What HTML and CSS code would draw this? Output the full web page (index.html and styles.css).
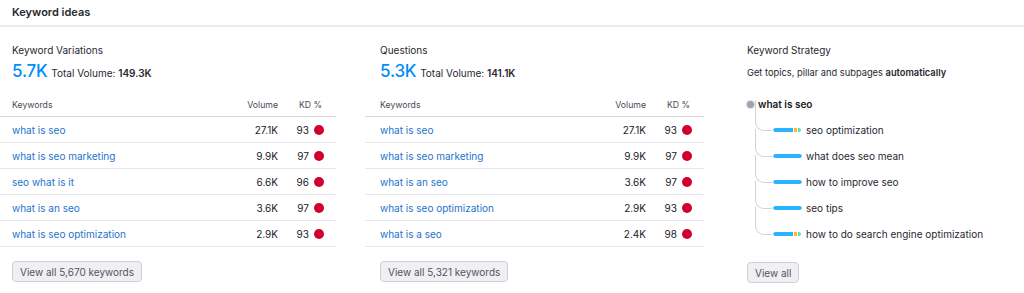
FILE: index.html
```html
<!DOCTYPE html>
<html lang="en">
<head>
<meta charset="utf-8">
<title>Keyword ideas</title>
<link rel="stylesheet" href="styles.css">
</head>
<body>
<div class="widget">
  <div class="widget-head">Keyword ideas</div>
  <div class="cols">
    <section class="col">
      <div class="col-title">Keyword Variations</div>
      <div class="summary"><span class="big">5.7K</span> Total Volume: <b>149.3K</b></div>
      <div class="kw-table">
        <div class="kw-row head"><span>Keywords</span><span class="vol">Volume</span><span class="kd-h">KD %</span></div>
        <div class="kw-row"><a class="kw" href="#">what is seo</a><span class="vol">27.1K</span><span class="kd">93<i class="dot"></i></span></div>
        <div class="kw-row"><a class="kw" href="#">what is seo marketing</a><span class="vol">9.9K</span><span class="kd">97<i class="dot"></i></span></div>
        <div class="kw-row"><a class="kw" href="#">seo what is it</a><span class="vol">6.6K</span><span class="kd">96<i class="dot"></i></span></div>
        <div class="kw-row"><a class="kw" href="#">what is an seo</a><span class="vol">3.6K</span><span class="kd">97<i class="dot"></i></span></div>
        <div class="kw-row"><a class="kw" href="#">what is seo optimization</a><span class="vol">2.9K</span><span class="kd">93<i class="dot"></i></span></div>
      </div>
      <button class="btn">View all 5,670 keywords</button>
    </section>
    <section class="col">
      <div class="col-title">Questions</div>
      <div class="summary"><span class="big">5.3K</span> Total Volume: <b>141.1K</b></div>
      <div class="kw-table">
        <div class="kw-row head"><span>Keywords</span><span class="vol">Volume</span><span class="kd-h">KD %</span></div>
        <div class="kw-row"><a class="kw" href="#">what is seo</a><span class="vol">27.1K</span><span class="kd">93<i class="dot"></i></span></div>
        <div class="kw-row"><a class="kw" href="#">what is seo marketing</a><span class="vol">9.9K</span><span class="kd">97<i class="dot"></i></span></div>
        <div class="kw-row"><a class="kw" href="#">what is an seo</a><span class="vol">3.6K</span><span class="kd">97<i class="dot"></i></span></div>
        <div class="kw-row"><a class="kw" href="#">what is seo optimization</a><span class="vol">2.9K</span><span class="kd">93<i class="dot"></i></span></div>
        <div class="kw-row"><a class="kw" href="#">what is a seo</a><span class="vol">2.4K</span><span class="kd">98<i class="dot"></i></span></div>
      </div>
      <button class="btn">View all 5,321 keywords</button>
    </section>
    <section class="col strategy">
      <div class="col-title">Keyword Strategy</div>
      <div class="desc">Get topics, pillar and subpages <b>automatically</b></div>
      <div class="tree">
        <div class="root"><i class="root-dot"></i>what is seo</div>
        <ul class="children">
          <li><span class="bar"><i class="b-blue"></i><i class="b-yellow"></i><i class="b-green"></i></span>seo optimization</li>
          <li><span class="bar"><i class="b-full"></i></span>what does seo mean</li>
          <li><span class="bar"><i class="b-full"></i></span>how to improve seo</li>
          <li><span class="bar"><i class="b-full"></i></span>seo tips</li>
          <li><span class="bar"><i class="b-blue"></i><i class="b-yellow"></i><i class="b-green"></i></span>how to do search engine optimization</li>
        </ul>
      </div>
      <button class="btn">View all</button>
    </section>
  </div>
</div>
</body>
</html>
```

FILE: styles.css
```css
* { box-sizing: border-box; }
html, body { margin: 0; padding: 0; background: #fff; }
body {
  font-family: Inter, "Noto Sans", "Liberation Sans", sans-serif;
  color: #191b23;
  font-size: 10px;
  overflow: hidden;
}
.widget { width: 1024px; }
.widget-head {
  height: 27px;
  padding: 5px 12px 0;
  font-size: 11px;
  font-weight: 600;
  line-height: 15px;
  color: #27282f;
  border-bottom: 2px solid #ececee;
}
.cols {
  display: grid;
  grid-template-columns: 339px 339px 1fr;
  column-gap: 29px;
  margin-left: -3px;
  padding-top: 16px;
}
.col { padding-left: 15px; }
.strategy { padding-left: 14px; }
.col-title {
  font-size: 10px;
  line-height: 14px;
  color: #27282f;
}
.summary {
  margin-top: 3px;
  height: 22px;
  display: flex;
  align-items: baseline;
  font-size: 10px;
  color: #27282f;
  white-space: pre;
}
.summary .big {
  font-size: 17px;
  font-weight: 500;
  line-height: 22px;
  color: #008ff8;
  letter-spacing: -0.2px;
  margin-right: 1px;
}
.summary b { font-weight: 600; }
.kw-table { margin: 12px 0 0 -15px; }
.kw-row {
  display: grid;
  grid-template-columns: 1fr 60px 58px;
  align-items: center;
  height: 26px;
  border-bottom: 1px solid #e6e7ea;
  padding-left: 15px;
  font-size: 10px;
}
.kw-row.head {
  height: 23px;
  font-size: 8.7px;
  color: #494b54;
  border-bottom: 1px solid #d5d6db;
}
.vol { text-align: right; }
.kd-h { text-align: right; padding-right: 14px; }
.kd {
  display: flex;
  justify-content: flex-end;
  align-items: center;
  gap: 5px;
  padding-right: 12px;
}
.kw { color: #1e74cc; text-decoration: none; }
.dot {
  width: 10px;
  height: 10px;
  border-radius: 50%;
  background: #d1002f;
}
.btn {
  margin-top: 14px;
  height: 21px;
  padding: 0 7px;
  font-family: inherit;
  font-size: 10px;
  color: #52545c;
  background: #f0f0f3;
  border: 1px solid #cfd0d6;
  border-radius: 4px;
}
.desc {
  margin-top: 9px;
  font-size: 9.3px;
  line-height: 14px;
  color: #27282f;
}
.desc b { font-weight: 600; }
.tree { margin-top: 16px; }
.root {
  display: flex;
  align-items: center;
  height: 16px;
  font-weight: 600;
  font-size: 10px;
}
.root-dot {
  width: 7px;
  height: 7px;
  border-radius: 50%;
  background: #a1a3ad;
  margin-right: 4px;
  box-shadow: 0 0 0 1px #dcdde2;
}
.children {
  list-style: none;
  margin: 5px 0 0;
  padding: 0 0 0 26px;
}
.children li {
  position: relative;
  display: flex;
  align-items: center;
  height: 26px;
  color: #27282f;
}
.children li::before {
  content: "";
  position: absolute;
  left: -18px;
  top: -14px;
  width: 16px;
  height: 27px;
  border-left: 1px solid #d3d4da;
  border-bottom: 1px solid #d3d4da;
  border-bottom-left-radius: 9px;
}
.children li:first-child::before { top: -17px; height: 30px; }
.bar {
  display: flex;
  width: 29px;
  height: 4px;
  margin-right: 4px;
  border-radius: 2px;
  overflow: hidden;
  gap: 1px;
}
.b-full { flex: 1; background: #2bb3ff; border-radius: 2px; }
.b-blue { width: 20px; background: #2bb3ff; border-radius: 2px 0 0 2px; }
.b-yellow { width: 3px; background: #ffb92e; }
.b-green { width: 3px; background: #59e3a6; border-radius: 0 2px 2px 0; }
.strategy .btn { margin-top: 15px; }
```
